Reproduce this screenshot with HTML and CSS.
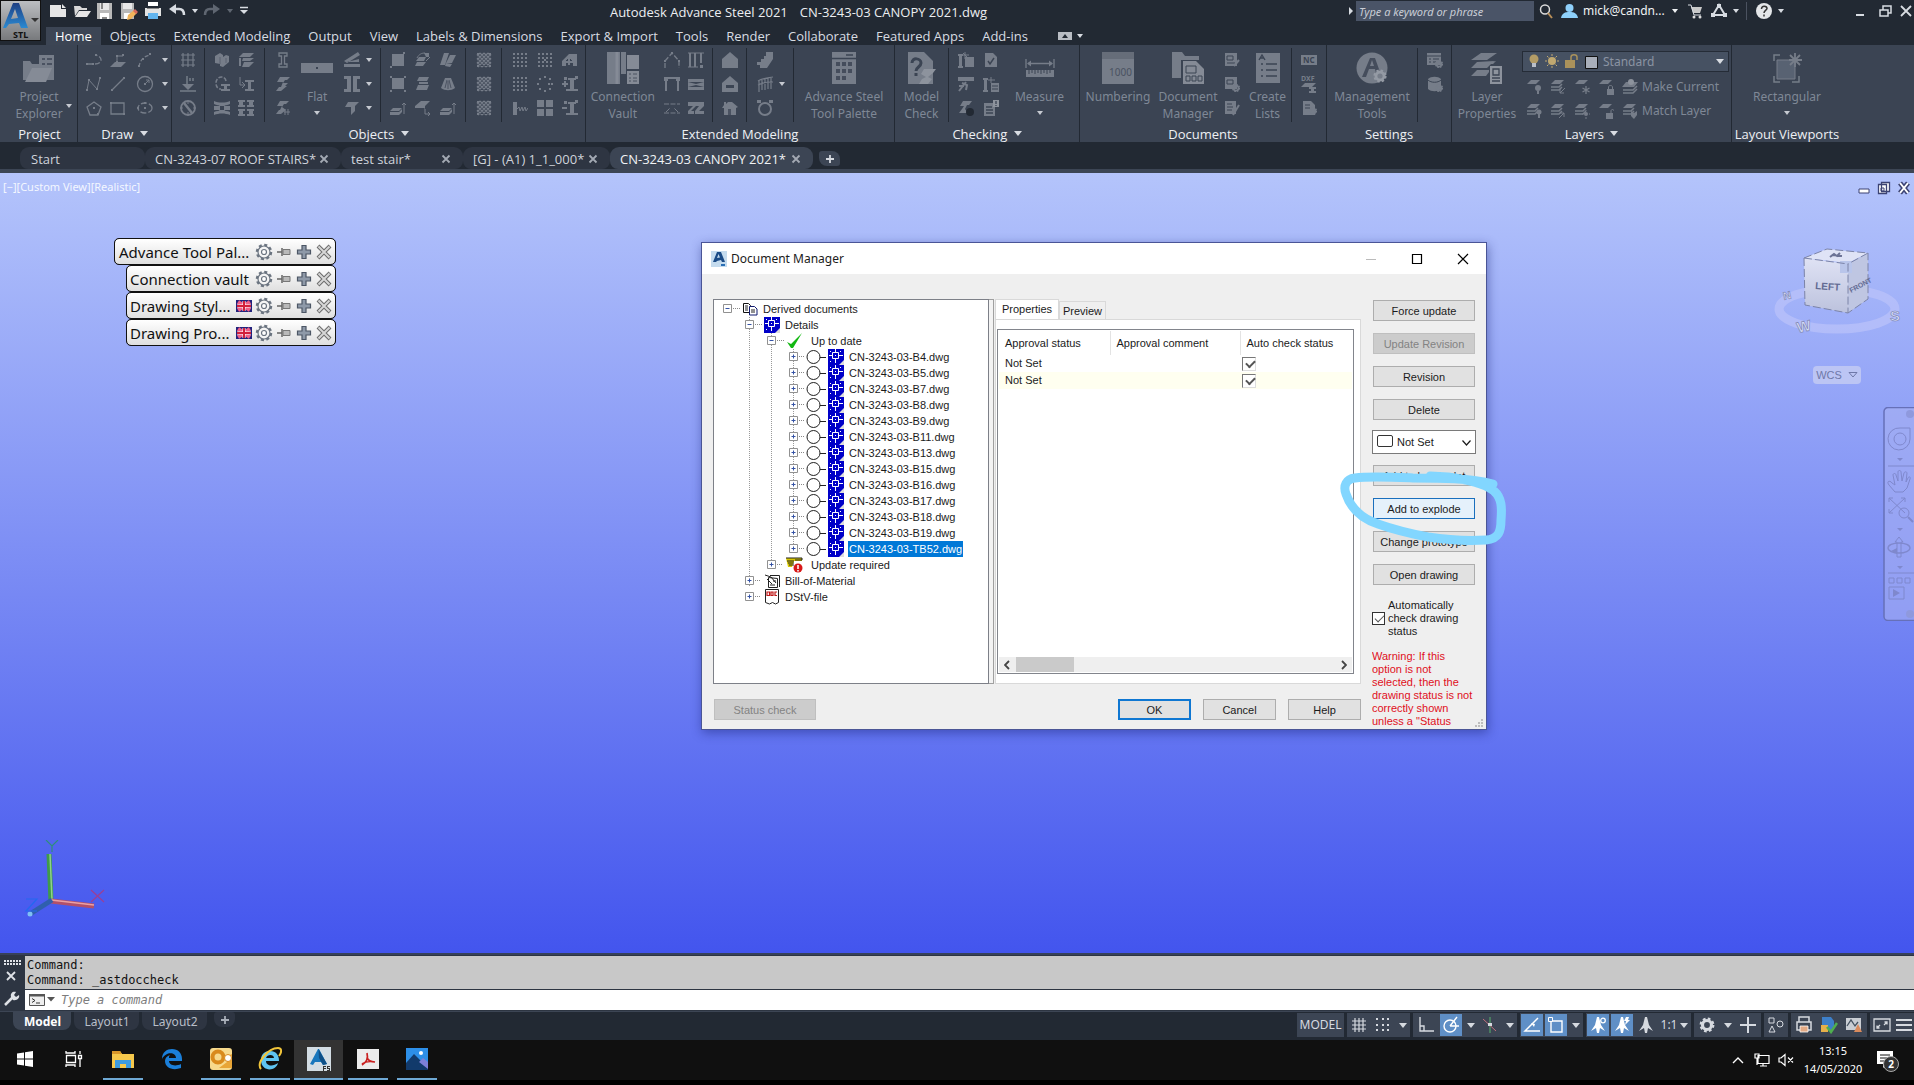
FILE: index.html
```html
<!DOCTYPE html>
<html lang="en">
<head>
<meta charset="utf-8">
<title>Autodesk Advance Steel 2021</title>
<link rel="stylesheet" href="styles.css">
<script src="icons.js" defer></script>
</head>
<body>
<header class="app-header">
  <button class="app-logo" aria-label="Application menu" data-icon="applogo"></button>
  <div class="qat">
    <button aria-label="New" data-icon="new"></button>
    <button aria-label="Open" data-icon="open"></button>
    <button aria-label="Save" data-icon="save"></button>
    <button aria-label="Save as" data-icon="saveas"></button>
    <button aria-label="Plot" data-icon="plot"></button>
    <button aria-label="Undo" data-icon="undo"></button>
    <button class="slim" aria-label="Undo list" data-icon="caret"></button>
    <button class="dim" aria-label="Redo" data-icon="redo"></button>
    <button class="slim dim" aria-label="Redo list" data-icon="caret"></button>
    <button class="slim last" aria-label="Customize" data-icon="menucaret"></button>
  </div>
  <h1 class="app-title"><span>Autodesk Advance Steel 2021</span><span>CN-3243-03 CANOPY 2021.dwg</span></h1>
  <div class="info">
    <span class="i8" data-icon="caretright"></span>
    <input class="search" type="text" aria-label="Search help" placeholder="Type a keyword or phrase">
    <button aria-label="Search" data-icon="magnifier"></button>
    <button class="user"><span data-icon="user"></span>mick@candn...<span class="i8" data-icon="caret"></span></button>
    <button aria-label="Store" data-icon="cart"></button>
    <button aria-label="Apps" data-icon="appsA"></button>
    <button class="slim" aria-label="Apps list" data-icon="caret"></button>
    <span class="rule"></span>
    <button aria-label="Help" data-icon="help"></button>
    <button class="slim" aria-label="Help list" data-icon="caret"></button>
    <span class="wins">
      <button aria-label="Minimize" data-icon="wmin"></button>
      <button aria-label="Restore" data-icon="wrestore"></button>
      <button aria-label="Close" data-icon="wclose"></button>
    </span>
  </div>
  <nav class="menu">
    <a href="#" class="on">Home</a><a href="#">Objects</a><a href="#">Extended Modeling</a><a href="#">Output</a><a href="#">View</a><a href="#">Labels &amp; Dimensions</a><a href="#">Export &amp; Import</a><a href="#">Tools</a><a href="#">Render</a><a href="#">Collaborate</a><a href="#">Featured Apps</a><a href="#">Add-ins</a>
    <button class="minribbon" aria-label="Minimize ribbon" data-icon="ribbonmin"></button>
  </nav>
</header>

<section class="ribbon">
  <div class="panel w-project">
    <div class="tools"><button class="big"><span data-icon="project"></span>Project<br>Explorer</button><span class="i8 side" data-icon="caret"></span></div>
    <h2>Project</h2>
  </div>
  <div class="panel w-draw">
    <div class="tools"><div class="group"><div class="icons draw" data-icons="polyline pline3d arc caret spline line circle caret polygon rect ellipse caret"></div></div></div>
    <h2>Draw <i class="tri"></i></h2>
  </div>
  <div class="panel w-objects">
    <div class="tools">
      <div class="group g32"><div class="icons c1" data-icons="grid level compass"></div></div>
      <div class="group g60"><div class="icons c2" data-icons="block sheet rotbeam copybeam boxframe match"></div></div>
      <div class="group g116"><div class="icons c1" data-icons="ibeam beam3d beamcut"></div>
        <button class="big flat"><span data-icon="flat"></span>Flat<span class="i8" data-icon="caret"></span></button>
        <div class="icons arrows" data-icons="plates caret channel caret fold caret"></div></div>
      <div class="group g86"><div class="icons w25 c3" data-icons="plate splitpl bentpl plateb weld cone slabup slabmove slabup"></div></div>
      <div class="group g36"><div class="icons c1" data-icons="grating grating grating"></div></div>
      <div class="group g84"><div class="icons w25 c3" data-icons="dots dotsx partadd dots ringdots colplus screw squares colminus"></div></div>
    </div>
    <h2>Objects <i class="tri"></i></h2>
  </div>
  <div class="panel w-ext">
    <div class="tools">
      <button class="big w76"><span data-icon="vault"></span>Connection<br>Vault</button>
      <div class="icons c2 frames" data-icons="truss cols portal brace xbrace zbeam"></div>
      <div class="group g36"><div class="icons c1" data-icons="house1 house2 house3"></div></div>
      <div class="group g48"><div class="icons arrows" data-icons="stair none railing caret ring none"></div></div>
      <div class="group grow"><button class="big"><span data-icon="palette"></span>Advance Steel<br>Tool Palette</button></div>
    </div>
    <h2>Extended Modeling</h2>
  </div>
  <div class="panel w-check">
    <div class="tools">
      <button class="big w50"><span data-icon="modelcheck"></span>Model<br>Check</button>
      <div class="group g60"><div class="icons w25 c2" data-icons="beamstar docok hammer beamlist beamlook doclist"></div></div>
      <button class="big grow measure"><span data-icon="measure"></span>Measure<span class="i8" data-icon="caret"></span></button>
    </div>
    <h2>Checking <i class="tri"></i></h2>
  </div>
  <div class="panel w-docs">
    <div class="tools">
      <button class="big w76"><span data-icon="numbering"></span>Numbering</button>
      <button class="big w64"><span data-icon="docmgr"></span>Document<br>Manager</button>
      <div class="icons c1" data-icons="docpen docgear docedit"></div>
      <button class="big w48"><span data-icon="lists"></span>Create<br>Lists</button>
      <div class="group g34"><div class="icons c1" data-icons="nc dxf ncgear"></div></div>
    </div>
    <h2>Documents</h2>
  </div>
  <div class="panel w-settings">
    <div class="tools">
      <button class="big grow"><span data-icon="mgmt"></span>Management<br>Tools</button>
      <div class="group g34"><div class="icons c1" data-icons="tablegear dbgear"></div></div>
    </div>
    <h2>Settings</h2>
  </div>
  <div class="panel w-layers">
    <div class="tools">
      <button class="big w68"><span data-icon="layers"></span>Layer<br>Properties</button>
      <div class="layerbox">
        <div class="layersel"><span class="deco" data-icon="layerstate"></span>
          <select aria-label="Layer"><option>Standard</option></select><i class="tri"></i></div>
        <div class="layerrow"><div class="icons row" data-icons="lay1 lay2 lay3 lay4 lay5"></div><button>Make Current</button></div>
        <div class="layerrow"><div class="icons row" data-icons="lay6 lay7 lay8 lay9 lay10"></div><button>Match Layer</button></div>
      </div>
    </div>
    <h2>Layers <i class="tri"></i></h2>
  </div>
  <div class="panel w-vp">
    <div class="tools"><button class="big w110"><span data-icon="rectvp"></span>Rectangular<span class="i8" data-icon="caret"></span></button></div>
    <h2>Layout Viewports</h2>
  </div>
</section>

<nav class="filetabs">
  <a href="#" class="ft t-start">Start</a>
  <a href="#" class="ft t-roof">CN-3243-07 ROOF STAIRS*<b data-icon="tabx"></b></a>
  <a href="#" class="ft t-test">test stair*<b data-icon="tabx"></b></a>
  <a href="#" class="ft t-g">[G] - (A1) 1_1_000*<b data-icon="tabx"></b></a>
  <a href="#" class="ft t-canopy on">CN-3243-03 CANOPY 2021*<b data-icon="tabx"></b></a>
  <button class="addtab" aria-label="New tab" data-icon="plus"></button>
</nav>

<main class="viewport">
  <p class="viewlabel">[−][Custom View][Realistic]</p>
  <div class="vpwins"><button aria-label="Minimize view" data-icon="vmin"></button><button aria-label="Restore view" data-icon="vrestore"></button><button aria-label="Close view" data-icon="vclose"></button></div>

  <div class="palettes">
    <div class="pal wide"><span>Advance Tool Pal...</span><button aria-label="Settings" data-icon="pgear"></button><button aria-label="Pin" data-icon="ppin"></button><button aria-label="Expand" data-icon="pplus"></button><button aria-label="Close" data-icon="pclose"></button></div>
    <div class="pal"><span>Connection vault</span><button aria-label="Settings" data-icon="pgear"></button><button aria-label="Pin" data-icon="ppin"></button><button aria-label="Expand" data-icon="pplus"></button><button aria-label="Close" data-icon="pclose"></button></div>
    <div class="pal"><span>Drawing Styl...</span><button aria-label="Language" data-icon="flag"></button><button aria-label="Settings" data-icon="pgear"></button><button aria-label="Pin" data-icon="ppin"></button><button aria-label="Expand" data-icon="pplus"></button><button aria-label="Close" data-icon="pclose"></button></div>
    <div class="pal"><span>Drawing Pro...</span><button aria-label="Language" data-icon="flag"></button><button aria-label="Settings" data-icon="pgear"></button><button aria-label="Pin" data-icon="ppin"></button><button aria-label="Expand" data-icon="pplus"></button><button aria-label="Close" data-icon="pclose"></button></div>
  </div>

  <svg class="cube" width="149" height="100" viewBox="1765 245 149 100">
    <defs><linearGradient id="cl" x1="0" y1="0" x2="0" y2="1"><stop offset="0" stop-color="#dfe2f4"/><stop offset="1" stop-color="#bcc2dd"/></linearGradient></defs>
    <ellipse cx="1837" cy="309" rx="58" ry="20" fill="none" stroke="#b9c2f9" stroke-opacity=".75" stroke-width="9"/>
    <path d="M1804 258l23-9 41 4-20 10z" fill="#dfe3f6"/>
    <path d="M1804 258l44 6v49l-43-8z" fill="url(#cl)"/>
    <path d="M1848 264l20-11v46l-20 14z" fill="#bfc6e2"/>
    <path d="M1840 261h12v12h-12z" fill="#b9c5ea"/>
    <path d="M1804 258l44 6v49M1804 258l23-9 41 4-20 11M1804 258l1 47 43 8 20-14v-46" fill="none" stroke="#7c84a8" stroke-dasharray="8 3"/>
    <text x="1815" y="289" class="cubeface" transform="rotate(4 1815 289)">LEFT</text>
    <text x="1851" y="293" class="cubeface slim" transform="rotate(-28 1851 293)">FRONT</text>
    <path d="M1830 257l4-3 3 2 3-3M1832 255l10 1" fill="none" stroke="#6c7396" stroke-width="2"/>
    <text x="1798" y="333" class="cubedir" transform="rotate(-12 1798 333)">W</text>
    <text x="1784" y="300" class="cubedir sm" transform="rotate(-12 1784 300)">N</text>
    <text x="1890" y="321" class="cubedir">S</text>
  </svg>
  <button class="wcs">WCS<svg width="10" height="6" viewBox="0 0 10 6"><path d="M1 .5h8L5 5z" fill="none" stroke="currentColor"/></svg></button>
  <div class="navbar" data-icon="navbar"></div>
  <div class="ucs" data-icon="ucs"></div>

  <section class="dialog" role="dialog" aria-label="Document Manager">
    <header class="dlg-title"><span data-icon="dlglogo"></span><h2>Document Manager</h2>
      <div class="dlg-wins"><button aria-label="Minimize" class="off" data-icon="dmin"></button><button aria-label="Maximize" data-icon="dmax"></button><button aria-label="Close" data-icon="dclose"></button></div></header>
    <div class="dlg-body">
      <div class="dlg-main">
        <div class="split">
          <div class="tree">
            <div class="n"><span data-icon="minus"></span><span data-icon="docs"></span>Derived documents</div>
            <div class="kids k0">
              <div class="n"><span data-icon="minus"></span><span data-icon="dwg"></span>Details</div>
              <div class="kids">
                <div class="n wideic"><span data-icon="minus"></span><span data-icon="okcheck"></span>Up to date</div>
                <div class="kids">
                  <div class="n f"><span data-icon="plusbox"></span><span data-icon="circle0"></span><span data-icon="dwg"></span><em>CN-3243-03-B4.dwg</em></div>
                  <div class="n f"><span data-icon="plusbox"></span><span data-icon="circle0"></span><span data-icon="dwg"></span><em>CN-3243-03-B5.dwg</em></div>
                  <div class="n f"><span data-icon="plusbox"></span><span data-icon="circle0"></span><span data-icon="dwg"></span><em>CN-3243-03-B7.dwg</em></div>
                  <div class="n f"><span data-icon="plusbox"></span><span data-icon="circle0"></span><span data-icon="dwg"></span><em>CN-3243-03-B8.dwg</em></div>
                  <div class="n f"><span data-icon="plusbox"></span><span data-icon="circle0"></span><span data-icon="dwg"></span><em>CN-3243-03-B9.dwg</em></div>
                  <div class="n f"><span data-icon="plusbox"></span><span data-icon="circle0"></span><span data-icon="dwg"></span><em>CN-3243-03-B11.dwg</em></div>
                  <div class="n f"><span data-icon="plusbox"></span><span data-icon="circle0"></span><span data-icon="dwg"></span><em>CN-3243-03-B13.dwg</em></div>
                  <div class="n f"><span data-icon="plusbox"></span><span data-icon="circle0"></span><span data-icon="dwg"></span><em>CN-3243-03-B15.dwg</em></div>
                  <div class="n f"><span data-icon="plusbox"></span><span data-icon="circle0"></span><span data-icon="dwg"></span><em>CN-3243-03-B16.dwg</em></div>
                  <div class="n f"><span data-icon="plusbox"></span><span data-icon="circle0"></span><span data-icon="dwg"></span><em>CN-3243-03-B17.dwg</em></div>
                  <div class="n f"><span data-icon="plusbox"></span><span data-icon="circle0"></span><span data-icon="dwg"></span><em>CN-3243-03-B18.dwg</em></div>
                  <div class="n f"><span data-icon="plusbox"></span><span data-icon="circle0"></span><span data-icon="dwg"></span><em>CN-3243-03-B19.dwg</em></div>
                  <div class="n f"><span data-icon="plusbox"></span><span data-icon="circle0"></span><span data-icon="dwg"></span><em class="sel">CN-3243-03-TB52.dwg</em></div>
                </div>
                <div class="n wideic"><span data-icon="plusbox"></span><span data-icon="update"></span>Update required</div>
              </div>
              <div class="n"><span data-icon="plusbox"></span><span data-icon="bom"></span>Bill-of-Material</div>
              <div class="n"><span data-icon="plusbox"></span><span data-icon="dstv"></span>DStV-file</div>
            </div>
          </div>
          <div class="splitter"></div>
          <div class="tabs">
            <div class="tabrow"><button class="on">Properties</button><button>Preview</button></div>
            <div class="page">
              <div class="list">
                <table>
                  <thead><tr><th class="c-status">Approval status</th><th class="c-comment">Approval comment</th><th>Auto check status</th></tr></thead>
                  <tbody>
                    <tr><td>Not Set</td><td></td><td class="ck"><input type="checkbox" checked aria-label="Auto check status, row 1"></td></tr>
                    <tr class="alt"><td>Not Set</td><td></td><td class="ck"><input type="checkbox" checked aria-label="Auto check status, row 2"></td></tr>
                  </tbody>
                </table>
                <div class="hscroll"><span data-icon="sleft"></span><i></i><span class="end" data-icon="sright"></span></div>
              </div>
            </div>
          </div>
        </div>
        <div class="dlg-foot"><button class="btn check" disabled>Status check</button><button class="btn ok">OK</button><button class="btn">Cancel</button><button class="btn">Help</button></div>
      </div>
      <aside class="actions">
        <button class="btn">Force update</button>
        <button class="btn" disabled>Update Revision</button>
        <button class="btn">Revision</button>
        <button class="btn">Delete</button>
        <div class="combo"><i></i><select aria-label="Approval status"><option>Not Set</option></select><span data-icon="chev"></span></div>
        <button class="btn">Add to batch plot</button>
        <button class="btn hot">Add to explode</button>
        <button class="btn">Change prototype</button>
        <button class="btn">Open drawing</button>
        <label class="auto"><input type="checkbox" checked><span>Automatically check drawing status</span></label>
        <p class="warn">Warning: If this option is not selected, then the drawing status is not correctly shown unless a "Status</p>
      </aside>
    </div>
    <span class="grip" data-icon="grip"></span>
    <svg class="mark" width="180" height="84" viewBox="1335 465 180 84"><path d="M1493 484C1470 478 1440 478 1413 478C1390 477 1370 476 1355 478C1346 479 1343 486 1346 494C1350 506 1360 518 1378 524C1395 530 1412 534 1428 537C1448 540 1470 541 1486 540C1499 539 1501 531 1501 520C1502 508 1502 498 1494 491C1484 483 1468 480 1448 477L1430 476" fill="none" stroke="#82d6ff" stroke-width="9" stroke-linecap="round" stroke-linejoin="round"/></svg>
  </section>
</main>

<section class="command">
  <div class="cmdside" data-icon="cmdside"></div>
  <div class="cmdmain">
    <div class="history"><p>Command:</p><p>Command: _astdoccheck</p></div>
    <div class="prompt"><span data-icon="cmdicon"></span><input type="text" aria-label="Command line" placeholder="Type a command"></div>
  </div>
</section>

<footer class="statusline">
  <nav class="layouts"><a href="#" class="on">Model</a><a href="#">Layout1</a><a href="#">Layout2</a><button aria-label="New layout" data-icon="plus"></button></nav>
  <div class="status">
    <div class="sg"><button class="s-model">MODEL</button></div>
    <div class="sg"><button aria-label="Grid" data-icon="sgrid"></button><button aria-label="Snap" data-icon="sdots"></button><button class="sl" aria-label="Snap options" data-icon="tri"></button></div>
    <div class="sg"><button class="w25" aria-label="Ortho" data-icon="sortho"></button><button class="on" aria-label="Polar" data-icon="spolar"></button><button class="sl" aria-label="Polar options" data-icon="tri"></button><button aria-label="Isodraft" data-icon="siso"></button><button class="sl" aria-label="Isodraft options" data-icon="tri"></button></div>
    <div class="sg"><button class="on" aria-label="Tracking" data-icon="sangle"></button><button class="on" aria-label="Object snap" data-icon="sosnap"></button><button class="sl" aria-label="Snap list" data-icon="tri"></button></div>
    <div class="sg"><button class="on" aria-label="Annotation visibility" data-icon="sann1"></button><button class="on" aria-label="Auto scale" data-icon="sann2"></button><button aria-label="Annotation" data-icon="sann3"></button><button class="scale">1:1<span class="i8" data-icon="tri"></span></button></div>
    <div class="sg"><button class="w25" aria-label="Workspace" data-icon="sgear"></button><button class="sl" aria-label="Workspace list" data-icon="tri"></button><button class="w25" aria-label="Monitor" data-icon="splus"></button></div>
    <div class="sg"><button aria-label="Isolate" data-icon="sshapes"></button></div>
    <div class="sg"><button class="w25" aria-label="Plot" data-icon="sprint"></button><button aria-label="Standards" data-icon="sstd"></button><button class="w25" aria-label="Performance" data-icon="sperf"></button></div>
    <div class="sg"><button aria-label="Clean screen" data-icon="sclean"></button><button class="edge" aria-label="Customization" data-icon="sburger"></button></div>
  </div>
</footer>

<footer class="taskbar">
  <button aria-label="Start" data-icon="win"></button>
  <button aria-label="Task view" data-icon="taskview"></button>
  <button class="run" aria-label="File Explorer" data-icon="explorer"></button>
  <button aria-label="Edge" data-icon="edge"></button>
  <button class="run" aria-label="Outlook" data-icon="outlook"></button>
  <button class="run" aria-label="Internet Explorer" data-icon="ie"></button>
  <button class="run cur" aria-label="Advance Steel" data-icon="tas"></button>
  <button class="run" aria-label="PDF reader" data-icon="pdf"></button>
  <button class="run" aria-label="Photos" data-icon="photos"></button>
  <div class="tray"><button aria-label="Hidden icons" data-icon="up"></button><button aria-label="Network" data-icon="net"></button><button aria-label="Volume" data-icon="vol"></button>
    <time>13:15<br>14/05/2020</time><button class="notif" aria-label="Notifications"><span data-icon="notif"></span><b>2</b></button></div>
</footer>
</body>
</html>
```
FILE: styles.css
```css
* { box-sizing: border-box; }
html, body { margin: 0; padding: 0; }
body {
  display: flex; flex-direction: column; min-height: 100vh; overflow: hidden;
  background: #222933; color: #d8dce2;
  font: 12px/16px "Noto Sans", "Open Sans", sans-serif;
}
button, input, select { font: inherit; color: inherit; margin: 0; padding: 0; border: 0; background: none; }
a { color: inherit; text-decoration: none; }
h1, h2, p { margin: 0; font-weight: 400; font-size: inherit; }
svg { display: block; flex: none; }
button { display: flex; align-items: center; justify-content: center; white-space: nowrap; }
em, i { font-style: normal; }
.tri { display: inline-block; border: 4px solid transparent; border-top: 5px solid #d8dce2; border-bottom: 0; }
.app-title, .menu, .panel h2, .filetabs { font-family: "Open Sans", "Noto Sans", sans-serif; font-size: 13px; }

/* title bar */
.app-header { display: grid; grid-template: 27px 18px / 46px 206px 1fr 569px; height: 45px; flex: none; }
.app-logo { grid-row: 1 / 3; justify-content: flex-start; align-items: flex-start; }
.qat { display: flex; align-items: center; height: 22px; }
.qat button { width: 24px; }
.qat .slim { width: 12px; }
.qat .last { width: 16px; }
.dim { color: #5f6671; }
.app-title { display: flex; justify-content: center; gap: 12px; line-height: 24px; color: #eceef1; white-space: nowrap; }
.info { display: flex; align-items: center; height: 22px; }
.info button { width: 24px; flex: none; }
.info .slim { width: 10px; }
.info .i8 { width: 11px; display: flex; justify-content: center; }
.search { width: 178px; height: 20px; background: #4a5467; padding: 0 3px; font-size: 11px; font-style: italic; }
.search::placeholder { color: #c9cdd6; opacity: 1; }
.info .user { width: auto; gap: 5px; padding-left: 3px; padding-right: 2px; color: #f0f2f4; }
.rule { width: 1px; height: 18px; background: #4b5260; margin: 0 5px; }
.wins { display: flex; margin-left: auto; gap: 1px; }
.wins button:last-child { width: 16px; }
.menu { grid-column: 2 / -1; display: flex; align-items: stretch; line-height: 18px; }
.menu a { padding: 0 9px; white-space: nowrap; }
.menu a.on { background: #3c4554; color: #fff; }
.minribbon { margin-left: 21px; }

/* ribbon */
.ribbon { display: flex; flex: none; height: 97px; background: #3b4453; padding-left: 2px; color: #7f8896; overflow: hidden; }
.panel { flex: none; display: flex; flex-direction: column; border-right: 1px solid #222933; }
.panel h2 { text-align: center; color: #eef0f3; line-height: 16px; height: 16px; white-space: nowrap; }
.panel h2 .tri { margin: 0 0 3px 3px; }
.w-project { width: 76px; } .w-draw { width: 94px; } .w-objects { width: 414px; } .w-ext { width: 309px; }
.w-check { width: 185px; } .w-docs { width: 247px; } .w-settings { width: 125px; } .w-layers { width: 280px; }
.w-vp { flex: 1; border: 0; }
.w-vp h2 { width: 110px; }
.tools { flex: 1; display: flex; padding-top: 3px; min-height: 0; }
.group { display: flex; justify-content: center; height: 74px; }
.group + .group, .icons + .group, .big + .group { border-left: 1px solid #222933; }
.w-draw .group { padding-left: 4px; }
.g32 { width: 32px; } .g34 { width: 34px; } .g36 { width: 36px; } .g48 { width: 48px; } .g60 { width: 60px; }
.g84 { width: 84px; padding-left: 3px; } .g86 { width: 86px; } .g116 { width: 116px; }
.grow { flex: 1; }
.frames { padding-right: 4px; }
.icons { display: grid; grid-auto-rows: 24px; align-content: start; color: #767d89; }
.icons > span { display: flex; align-items: center; justify-content: center; }
.c1 { grid-template-columns: 24px; } .c2 { grid-template-columns: 24px 24px; } .c3 { grid-template-columns: repeat(3, 24px); }
.w25.c2 { grid-template-columns: 25px 25px; } .w25.c3 { grid-template-columns: repeat(3, 25px); }
.draw { grid-template-columns: 24px 24px 30px 10px; }
.arrows { grid-template-columns: 24px 10px; }
.icons > .i-caret { color: #c6cad1; }
.big { flex-direction: column; justify-content: flex-start; line-height: 17px; height: 76px; width: 74px; color: #7f8896; }
.big > span:first-child { height: 40px; display: flex; align-items: center; color: #767d89; }
.big .i8 { padding-top: 4px; color: #c6cad1; }
.big.grow { width: auto; }
.w-project .tools { position: relative; }
.side { position: absolute; right: 4px; top: 57px; color: #c6cad1; }
.flat { width: 45px; } .w48 { width: 47px; } .w50 { width: 53px; } .w64 { width: 64px; } .w68 { width: 70px; } .w76 { width: 76px; } .w110 { width: 110px; }
.measure { padding-right: 8px; }
.w-ext .grow .big { width: 100px; }
.layerbox { flex: 1; padding: 3px 2px 0 0; }
.layersel { position: relative; height: 21px; border: 1px solid #252c37; background: #465162; margin-bottom: 3px; }
.layersel select { width: 100%; height: 19px; padding-left: 80px; appearance: none; color: #8b94a2; }
.layersel .deco { position: absolute; left: 4px; top: 1px; }
.layersel .tri { position: absolute; right: 4px; top: 7px; }
.layerrow { display: flex; height: 24px; align-items: center; }
.row { grid-template-columns: repeat(5, 24px); }
.layerrow button { color: #7f8896; }

/* drawing tabs */
.filetabs { display: flex; flex: none; height: 31px; padding-top: 5px; border-bottom: 4px solid #3c4554; }
.ft { display: flex; align-items: center; justify-content: space-between; background: #2e3542; border-radius: 9px 9px 8px 8px; height: 22px; padding: 1px 12px 0 10px; color: #cfd3da; white-space: nowrap; }
.ft b { color: #a3a9b3; }
.ft.on { background: #3c4554; color: #f1f3f5; }
.t-start { width: 125px; margin-left: 20px; padding-left: 11px; }
.t-roof { width: 196px; } .t-test { width: 122px; } .t-g { width: 147px; } .t-canopy { width: 203px; }
.addtab { width: 21px; margin-left: 6px; height: 15px; margin-top: 4px; background: #3c4554; border-radius: 3px 8px 3px 8px; color: #d5d9df; }

/* viewport */
.viewport { position: relative; flex: 1; min-height: 780px; background: linear-gradient(#b4c4fb, #4355ee); overflow: hidden; color: #111; }
.viewlabel { padding: 6px 3px; font-size: 11px; color: #f4f7ff; }
.vpwins { position: absolute; right: 0; top: 8px; display: flex; }
.vpwins button { width: 20px; }
.palettes { position: absolute; left: 114px; top: 65px; width: 222px; display: flex; flex-direction: column; align-items: flex-end; }
.pal { display: flex; align-items: center; width: 210px; height: 27px; border: 1px solid #111; border-radius: 5px; background: linear-gradient(#fff, #dfdfdf); padding: 0 1px 0 3px; font-size: 15px; outline: 1px solid rgba(17, 17, 17, .4); outline-offset: -1px; }
.pal.wide { width: 222px; padding-left: 4px; }
.pal span:first-child { flex: 1; white-space: nowrap; }
.pal button { width: 20px; flex: none; }
.cube { position: absolute; right: 0; top: 72px; }
.cubeface { font: bold 10px "Liberation Sans", sans-serif; fill: #636b93; }
.cubeface.slim { font-family: "Liberation Sans Narrow", "Liberation Sans", sans-serif; font-size: 7px; }
.cubedir { font: bold 15px "Liberation Sans", sans-serif; fill: #d6dbf6; stroke: #7881ae; stroke-width: .6px; }
.cubedir.sm { font-size: 11px; }
.wcs { position: absolute; right: 53px; top: 193px; width: 48px; height: 18px; border-radius: 4px; background: #bcc5f4; color: #6f78a8; font: 11px "Liberation Sans", sans-serif; gap: 6px; }
.navbar { position: absolute; right: 0; top: 234px; color: #7f88cd; }
.ucs { position: absolute; left: 20px; bottom: 33px; }

/* document manager */
.dialog { position: absolute; left: 701px; top: 69px; width: 786px; height: 488px; border: 1px solid #4a5596; background: #efefef; box-shadow: 1px 3px 10px rgba(20, 30, 110, .45); font: 11px/13px "Liberation Sans", Arial, sans-serif; color: #1b1b1b; }
.dlg-title { display: flex; align-items: center; height: 31px; background: #fff; padding-left: 9px; gap: 4px; font: 12px/16px "Noto Sans", sans-serif; }
.dlg-wins { display: flex; margin-left: auto; }
.dlg-wins button { width: 46px; color: #000; }
.dlg-wins .off { color: #bbb; }
.dlg-body { display: flex; padding: 25px 10px 0 11px; gap: 11px; height: 455px; }
.dlg-main { flex: 1; display: flex; flex-direction: column; padding-left: 1px; }
.split { display: flex; height: 385px; margin-left: -1px; }
.tree { width: 276px; border: 1px solid #7d8088; background: #fff; padding: 1px 0 0 8px; }
.n { display: flex; align-items: center; height: 16px; white-space: nowrap; }
.n > span:first-child { width: 20px; }
.n > span:nth-child(2) { width: 21px; display: flex; }
.n.f > span:first-child { width: 17px; }
.n.f > span:nth-child(2) { width: 23px; } .n.f > span:nth-child(3) { width: 20px; }
.n.wideic > span:nth-child(2) { width: 25px; }
.kids { padding-left: 22px; }
.k0 .kids { background: repeating-linear-gradient(#999 0 1px, transparent 1px 2px) 5px 0 / 1px 100% no-repeat; }
.k0 { background: repeating-linear-gradient(#999 0 1px, transparent 1px 2px) 27px 0 / 1px 270px no-repeat; }
.k0 > .kids { background-position: 27px 0; background-size: 1px 230px; }
.k0 > .kids > .kids { background-position: 27px 0; background-size: 1px 204px; }
.n em { padding: 0 1px; line-height: 16px; }
.sel { background: #0078d7; color: #fff; }
.splitter { width: 5px; border: solid #a0a0a0; border-width: 1px 1px 1px 0; background: #f3f3f3; }
.tabs { flex: 1; display: flex; flex-direction: column; padding-left: 1px; }
.tabrow { display: flex; align-items: flex-end; height: 21px; margin-bottom: -1px; }
.tabrow button { height: 19px; border: 1px solid #d9d9d9; border-bottom: 0; padding: 0 4px; width: 47px; }
.tabrow .on { height: 21px; width: 64px; background: #fff; padding-bottom: 2px; }
.page { flex: 1; background: #fff; border: 1px solid #d9d9d9; padding: 9px 6px 9px 1px; display: flex; }
.list { flex: 1; display: flex; flex-direction: column; border: 1px solid #82858c; padding: 1px; }
table { border-collapse: collapse; table-layout: fixed; width: 100%; }
th, td { text-align: left; font-weight: 400; padding: 0 6px; white-space: nowrap; height: 17px; }
th { height: 24px; border-right: 1px solid #e3e3e3; }
th:last-child { border: 0; padding-right: 0; }
.c-status { width: 111px; } .c-comment { width: 130px; }
.alt { background: #fffff0; }
td.ck { padding: 0 2px; }
.ck input { display: block; appearance: none; position: relative; width: 14px; height: 14px; background: #fff; border: 1px solid; border-color: #777 #ddd #ddd #777; }
.ck input::before, .auto input::before { content: ""; position: absolute; left: 3px; top: 2px; width: 7px; height: 4px; border: solid #555; border-width: 0 0 2px 2px; transform: rotate(-45deg); }
.hscroll { display: flex; align-items: center; height: 15px; background: #efefef; margin-top: auto; padding: 0 5px; color: #444; }
.hscroll i { width: 58px; height: 15px; background: #cacaca; margin-left: 6px; }
.hscroll .end { margin-left: auto; }
.dlg-foot { display: flex; justify-content: flex-end; gap: 12px; margin-top: 15px; }
.btn { height: 21px; border: 1px solid #adadad; background: #e1e1e1; padding-top: 1px; }
.btn:disabled { background: #cccccc; border-color: #bfbfbf; color: #838383; }
.dlg-foot .btn { width: 73px; }
.dlg-foot .check { width: 102px; margin-right: auto; }
.dlg-foot .ok { border: 2px solid #0f77d2; }
.actions { width: 104px; padding-top: 1px; display: flex; flex-direction: column; gap: 12px; overflow: hidden; }
.actions .btn { width: 102px; flex: none; margin-left: 1px; }
.actions .hot { background: #e5f1fb; border-color: #1a6fbd; }
.combo { position: relative; height: 24px; margin: -2px 0 -1px; flex: none; border: 1px solid #7a7a7a; background: #fff; }
.combo select { width: 100%; height: 22px; padding: 1px 0 0 24px; appearance: none; }
.combo i { position: absolute; left: 4px; top: 4px; width: 16px; height: 12px; border: 1px solid #333; border-radius: 2px; }
.combo span { position: absolute; right: 4px; top: 9px; }
.auto { display: flex; align-items: center; gap: 3px; padding-top: 2px; }
.auto input { appearance: none; position: relative; width: 13px; height: 13px; flex: none; background: #fff; border: 1px solid #333; }
.auto input::before { left: 2px; width: 8px; border-width: 0 0 1px 1px; }
.warn { color: #e0101c; width: 104px; flex: none; }
.grip { position: absolute; right: 3px; bottom: 2px; color: #bdbdbd; }
.mark { position: absolute; left: 633px; top: 222px; pointer-events: none; }

/* command line */
.command { display: flex; flex: none; height: 58px; background: #2d3542; border-top: 2px solid #37415a; }
.cmdside { width: 25px; color: #dfe2e7; }
.cmdmain { flex: 1; padding-top: 1px; font: 12px/15px "DejaVu Sans Mono", "Liberation Mono", monospace; color: #111; }
.history { height: 33px; background: #c8c8c8; padding: 2px; }
.prompt { display: flex; align-items: center; height: 20px; margin-top: 1px; background: #fff; padding-left: 4px; gap: 6px; }
.prompt input { flex: 1; font-style: italic; }
.prompt input::placeholder { color: #7d7d7d; opacity: 1; }

/* layout tabs and status bar */
.statusline { display: flex; justify-content: space-between; flex: none; height: 29px; border-top: 1px solid #3c4554; }
.layouts { display: flex; height: 18px; padding-left: 13px; font-size: 12px; line-height: 20px; }
.layouts a { background: #2e3542; padding: 0 9px 0 10px; border-radius: 0 0 8px 8px; margin-right: 3px; min-width: 65px; text-align: center; color: #b9bfc9; }
.layouts a.on { background: #3c4554; color: #fff; font-weight: 700; min-width: 58px; }
.layouts button { width: 21px; height: 15px; background: #2e3542; border-radius: 3px 3px 8px 8px; margin-left: 4px; color: #a9afb9; }
.status { display: flex; gap: 3px; padding-top: 1px; height: 25px; color: #d6dae0; }
.sg { display: flex; background: #3c4554; }
.status button { width: 24px; }
.status .on { width: 22px; margin: 1px; background: #5f8fc6; color: #fff; }
.status .sl { width: 15px; }
.status .s-model { width: 47px; font-size: 12px; }
.status .scale { width: 33px; gap: 3px; font-size: 12px; }
.status .w25 { width: 26px; }
.status .edge { width: 20px; }

/* taskbar */
.taskbar { display: flex; flex: none; height: 45px; background: #101010; border-bottom: 5px solid #000; color: #fff; }
.taskbar > button { width: 49px; border-bottom: 2px solid transparent; position: relative; }
.taskbar .run::after { content: ""; position: absolute; left: 5px; right: 4px; bottom: -2px; height: 2px; background: #6ea8d4; }
.taskbar .cur { background: #333; }
.taskbar .cur::after { left: 0; right: 0; }
.tray { margin-left: auto; display: flex; align-items: center; padding-right: 12px; }
.tray button { width: 24px; }
.tray time { width: 70px; text-align: center; line-height: 18px; font-size: 11px; }
.tray .notif { position: relative; width: 34px; }
.notif b { position: absolute; left: 15px; top: 6px; width: 16px; height: 16px; border-radius: 8px; border: 1px solid #aaa; background: #333; font-size: 10px; line-height: 14px; }
```
FILE: icons.js
```js
// Icon registry: name -> [width, height, svg body]; 16x16 unless sized.
const S = (d, w = 1, extra = "") => `<path d="${d}" fill="none" stroke="currentColor" stroke-width="${w}" ${extra}/>`;
const F = (d, c = "currentColor") => `<path d="${d}" fill="${c}"/>`;
const dots = (pts) => F(pts.map(([x, y]) => `M${x} ${y}h2v2h-2z`).join(""));
const layer = (y) => `M5 ${y}h9l-4 4H1z`;
const stack = F(layer(1)) + S("M1 8h8l3-3M1 11h8l3-3", 1.5);
const doc = "M2 1h8l4 4v10H2z";
const gear = (cx, cy, r, c = "currentColor") =>
  `<circle cx="${cx}" cy="${cy}" r="${r}" fill="none" stroke="${c}" stroke-width="${r * 0.7}"/><circle cx="${cx}" cy="${cy}" r="${r * 1.4}" fill="none" stroke="${c}" stroke-width="${r * 0.5}" stroke-dasharray="${r * 0.6} ${r * 0.5}"/>`;
const hatch = S("M1 4L4 1M1 8l7-7M1 12L12 1M2 15L15 2M6 15l9-9M10 15l5-5M12 1l3 3M8 1l7 7M4 1l11 11M1 2l13 13M1 6l9 9M1 10l5 5", 1.2) + dots([[1, 1], [13, 1], [1, 13], [13, 13]]);
const dotgrid = dots([0, 4, 8, 12].flatMap((y) => [0, 4, 8, 12].map((x) => [x + 1, y + 1])));
const annA = F("M7 0l2 0 2 8 4 6-5-3-1 5h-2l-1-5-5 3 4-6z");

const ICONS = {
  none: [1, 1, ""],
  caret: [8, 8, F("M1 2h6L4 6z")],
  tri: [8, 8, F("M0 2h8L4 7z")],
  caretright: [8, 10, F("M2 1l4 4-4 4z")],
  menucaret: [10, 10, S("M1 1.500h8", 1.500) + F("M1 4h8L5 8z")],
  plus: [10, 10, S("M5 1v8M1 5h8", 1.800)],
  tabx: [10, 10, S("M1.500 1.500l7 7M8.500 1.500l-7 7", 1.800)],
  applogo: [42, 41, `<defs><linearGradient id="lg" x1="0" y1="0" x2="0" y2="1"><stop offset="0" stop-color="#bdbfc2"/><stop offset="1" stop-color="#77797c"/></linearGradient><linearGradient id="la" x1="0" y1="0" x2="0" y2="1"><stop offset="0" stop-color="#1e3f83"/><stop offset="1" stop-color="#2b8ad2"/></linearGradient></defs><rect x=".5" y=".5" width="40" height="40" fill="url(#lg)" stroke="#111"/><path d="M3 28L13 3h6l9 25h-7l-2-5-10 1-3 4zM11 19l7-1-3-9z" fill="url(#la)"/><path d="M31 18h8l-4 4z" fill="#333"/><text x="13" y="38" font-family="Noto Sans" font-size="9" font-weight="700" fill="#111">STL</text>`],
  new: [18, 16, F("M1 2h11v4h5v8H1z", "#e6e6e6") + F("M13 1l4 4h-4z", "#e6e6e6")],
  open: [18, 16, F("M1 3h6l2 2h5v2H6l-4 6z", "#d9d9d9") + F("M6 8h12l-4 6H2z", "#e6e6e6")],
  save: [18, 18, F("M1 1h15v16H1z", "#b9b9b9") + F("M4 1h9v7H4z", "#e8e8e8") + F("M4 11h9v6H4z", "#fff") + F("M6 15h5v2H6zM5 1h2v6H5z", "#888")],
  saveas: [18, 18, F("M1 1h13v16H1z", "#b9b9b9") + F("M3 1h9v6H3z", "#e8e8e8") + F("M4 11h6v6H4z", "#fff") + F("M8 13l6-5 3 3-6 6-4 1z", "#f1b45b") + F("M13 9l2-2 3 3-2 2z", "#d96b5c")],
  plot: [18, 18, F("M4 0h10v4H4z", "#fff") + F("M1 6h16v8H1z", "#e3e3e3") + F("M4 11h10v6H4z", "#62b4ee") + F("M3 6h12v1H3z", "#888")],
  undo: [18, 14, S("M5 5h6c4 0 5 3 5 6", 2.500) + F("M8 0v10L1 5z")],
  redo: [18, 14, S("M13 5H7c-4 0-5 3-5 6", 2.500) + F("M10 0v10l7-5z")],
  magnifier: [16, 16, `<circle cx="7" cy="6.500" r="4.500" fill="none" stroke="#dcdcdc" stroke-width="1.500"/><path d="M10 10l4 5" stroke="#b98f57" stroke-width="2"/>`],
  user: [17, 16, `<circle cx="8.500" cy="5" r="4" fill="#8ed0fb"/>` + F("M0 15c1-5 4-6 8.500-6s7.500 1 8.500 6z", "#8ed0fb")],
  cart: [16, 16, F("M4 4h11l-2 6H6z", "#c9c9c9") + S("M1 2h3l3 10h7") + `<circle cx="7" cy="14" r="1.500" fill="#ddd"/><circle cx="13" cy="14" r="1.500" fill="#ddd"/>`],
  appsA: [16, 16, S("M8 2L2 12h12z", 2) + F("M6 1h4v4H6zM0 10h4v4H0zM12 10h4v4h-4z")],
  help: [18, 18, `<circle cx="9" cy="9" r="8" fill="#e4e6e9"/><path d="M6.500 7c0-4 5.500-3 5.500-.500C12 8 9 8.500 9 11M9 12.500v2" fill="none" stroke="#333" stroke-width="1.500"/>`],
  wmin: [14, 14, S("M3 11h8", 2)],
  wrestore: [14, 14, S("M2 6h8v6H2zM5 6V2h8v7h-3", 1.500)],
  wclose: [14, 14, S("M2 2l10 10M12 2L2 12", 1.800)],
  ribbonmin: [26, 12, F("M0 2h14v8H0z", "#b9bdc4") + F("M4 8l3-4 3 4z", "#222933") + F("M19 4h6l-3 4z")],
  project: [34, 30, F("M17 2h15v25H17z") + F("M1 8h7l2 3h9v4L12 16 5 27H1z") + F("M10 15h20l-6 14H3z", "#858b96") + `<path d="M20 6h3M25 6h5M20 11h3M25 11h5" stroke="#4a5261" stroke-width="2"/>`],
  polyline: [16, 16, S("M1 12h6M9 12c8 0 8-8 0-9", 1.300, 'stroke-dasharray="5 2"') + dots([[0, 11], [6, 11], [9, 2]])],
  pline3d: [16, 16, F("M5 10h11l-5 5H0z") + S("M7 11V4h6") + dots([[6, 9], [6, 3], [12, 2]])],
  arc: [16, 16, S("M2 15C3 8 7 4 13 3", 1.300, 'stroke-dasharray="4 2"') + dots([[1, 13], [5, 6], [12, 1]])],
  spline: [16, 16, S("M1 14L3 4l8 9 3-11") + dots([[0, 13], [2, 3], [10, 12], [13, 1]])],
  line: [16, 16, S("M2 14L14 2", 1.300) + dots([[1, 13], [13, 1]])],
  circle: [18, 18, `<circle cx="9" cy="9" r="7.500" fill="none" stroke="currentColor" stroke-width="1.300"/>` + S("M9 9l4-4M10 5h3v3") + dots([[8, 8]])],
  polygon: [16, 16, S("M8 2l7 5-3 8H4L1 7z", 1.300) + dots([[7, 7], [11, 13]])],
  rect: [16, 16, S("M1 3h13v11H1z", 1.300) + dots([[0, 2], [13, 13]])],
  ellipse: [16, 16, `<ellipse cx="8" cy="8" rx="7" ry="5" fill="none" stroke="currentColor" stroke-width="1.300" stroke-dasharray="6 2"/>` + dots([[7, 7], [7, 2], [0, 7]])],
  grid: [16, 16, S("M3 1v14M8 1v14M13 1v14M1 3h14M1 8h14M1 13h14", 1.200)],
  level: [16, 16, F("M2 8h12l-6 6z") + S("M7 0v8M10 2v3M13 2v3M0 15h16", 1.500)],
  compass: [18, 18, `<circle cx="9" cy="9" r="7" fill="none" stroke="currentColor" stroke-width="1.800"/>` + S("M5 4l8 10", 2.500) + S("M9 1v4M9 13v4M1 9h3M14 9h3")],
  block: [16, 16, F("M1 4l5-3 3 2v2l3-2 3 1v6l-6 5-3-1v-2l-5-1z") + `<path d="M6 5v7M12 6v5" stroke="#5b6370"/>`],
  sheet: [16, 16, F("M5 1h11l-4 4H1zM5 6h11l-4 3H4zM6 10h10l-5 5H4zM1 6h2v8H1z")],
  rotbeam: [16, 16, S("M12 5C11-1 2 0 2 7c0 5 3 6 5 6", 1.600, 'stroke-dasharray="4 1.500"') + F("M7 8h9v2h-3v3h3v2H7v-2h3v-3H7z")],
  copybeam: [16, 16, S("M2 1v8h4M4 6l3 3-3 3") + F("M7 4h9v2h-3v7h3v2H7v-2h3V6H7z")],
  boxframe: [16, 16, F("M0 1c5 2 11 2 16 0v3c-5 2-11 2-16 0zM0 15c5-2 11-2 16 0v-3c-5-2-11-2-16 0zM0 6h16v4H0z") + `<path d="M5.500 5.500h5v5h-5z" fill="#3b4453" stroke="currentColor"/>`],
  match: [16, 16, F("M0 0h7v2H5v3h2v2H0V5h1V2H0zM9 0h7v2h-1v3h1v2H9V5h2V2H9zM0 9h7v2H5v3h2v2H0v-2h1v-3H0zM9 9h7v2h-1v3h1v2H9v-2h2v-3H9z")],
  ibeam: [16, 16, S("M4 1h8v3H9.500v8H12v3H4v-3h2.500V4H4z", 1.300)],
  beam3d: [16, 16, F("M5 1h10l-3 3h-2l-2 3h5l-3 3H8l4 0-6 5H1l3-4h2L8 6H2z")],
  beamcut: [16, 16, F("M5 1h9l-3 3H9L7 7l4 3-5 4H1l3-4h1l2-4H2z") + S("M9 12h6M13 9v6M10 9v6")],
  flat: [32, 12, F("M0 1h32v10H0z") + F("M15 5h2v2h-2z", "#3b4453")],
  plates: [16, 16, F("M0 9L14 0l2 3L3 11zM0 12h16v3H0zM3 10h12V7z")],
  channel: [16, 16, F("M0 0h7v16H0v-3h3V3H0zM16 0H9v16h7v-3h-3V3h3z")],
  fold: [16, 16, F("M4 2h11l-4 4v5l-4 4V7H1z")],
  plate: [16, 16, F("M2 2h12v12H2z") + dots([[0, 14], [13, 0]])],
  plateb: [16, 16, F("M2 2h12v11H2z") + dots([[0, 0], [14, 0], [0, 14], [14, 14]])],
  splitpl: [16, 16, F("M4 5h7l-2 4H1zM2 10h9l-3 4H0zM9 1h5v4h-3z") + S("M2 6c2-4 5-5 8-5M11 9l4-4")],
  bentpl: [16, 16, F("M4 1h5L5 13H0zM10 3h6l-4 8H6zM6 11l6 1-2 3-5-1z")],
  weld: [16, 16, F("M4 1h10l-2 4H2zM3 9h11l-2 5H1z") + S("M4 7h9", 2)],
  cone: [16, 16, F("M5 2h6l4 10c-4 3-10 3-14 0z") + `<path d="M5 12L7 4M9 4l2 8M8 5v8" stroke="#4a5261" fill="none"/>`],
  slabup: [16, 16, F("M3 8h9l-3 3H0zM0 12h9v3H0zM9 12l3-3v3l-3 3z") + S("M14 14V3M12 5l2-2 2 2")],
  slabmove: [16, 16, F("M6 1h9l-5 5v3L9 8H0V6z") + S("M10 9v5h5M13 12l2 2-2 2")],
  grating: [16, 16, hatch],
  dots: [16, 16, dotgrid],
  dotsx: [16, 16, dotgrid + S("M5 5l6 6M11 5l-6 6")],
  ringdots: [16, 16, dots([[7, 0], [12, 2], [14, 7], [12, 12], [7, 14], [2, 12], [0, 7], [2, 2], [11, 7]])],
  partadd: [16, 16, F("M7 2h8v12h-4v-3H4v3H0V9z") + `<path d="M7 7v6M4 10h6" stroke="#3b4453" stroke-width="4"/>` + S("M7 7v6M4 10h6", 2)],
  colplus: [16, 16, F("M8 3h4v10h4v2H4v-2h4z") + S("M0 8h6M3 5v6", 2) + F("M2 1h3v3H2zM6 2h8v2H6zM13 0h3v3h-3z")],
  colminus: [16, 16, F("M8 3h4v10h4v2H4v-2h4z") + S("M0 8h5", 2) + F("M2 1h3v3H2zM6 2h8v2H6zM13 0h3v3h-3z")],
  screw: [16, 16, F("M1 2h4v13H1z") + S("M5 9l2-2 1 4 2-4 1 4 2-4 1 4 2-3")],
  squares: [16, 16, F("M0 0h7v7H0zM9 0h7v7H9zM0 9h7v7H0zM9 9h7v7H9z")],
  vault: [32, 34, F("M0 1h13v32H0z") + F("M14 1h5v22h-5z") + F("M20 4h12v14H20zM20 20h12v13H20z", "#858b96") + `<path d="M10 1v32" stroke="#858b96" stroke-width="3"/><path d="M22 23h2M26 23h4M22 27h2M26 27h4M22 30h2M26 30h4" stroke="#4a5261"/>`],
  truss: [16, 16, S("M1 16V9l7-8 7 8v7", 1.300, 'stroke-dasharray="5 2"') + dots([[0, 8], [7, 0], [14, 8]])],
  cols: [16, 16, S("M2 1v14M7 1v14M13 1v10", 2) + S("M0 1h16M0 15h10") + F("M12 13h3v3h-3z")],
  portal: [16, 16, S("M2 15V2h12v13", 2) + F("M0 1h4v4H0zM12 1h4v4h-4z")],
  brace: [16, 16, F("M0 3h16v3H0zM0 11h16v3H0zM0 6l8 2 8-2v5l-8-2-8 2z")],
  xbrace: [16, 16, S("M0 4h16M0 13h16M2 12l4-4M14 12l-4-4", 1, 'stroke-dasharray="5 1.500"')],
  zbeam: [16, 16, F("M0 2h16v4l-5 5h5v3H7v-3l4-5H8l-5 5h3v3H0v-3l5-5H0z")],
  house1: [16, 16, F("M8 0l8 7v9H0V7z")],
  house2: [16, 16, F("M8 0l8 7v9H0V7z") + F("M4 9h8v3H4z", "#3b4453")],
  house3: [16, 16, F("M2 2h2v2l2-2 4 0 6 5-2 1v7H2V8L0 8l2-3z") + F("M6 9h3v6H6z", "#4a5261")],
  stair: [16, 16, F("M9 0h7v7l-6 9H3v-3H0v-3h4V7h3V4h2z")],
  railing: [16, 16, S("M1 5c5-3 10-3 15-4M1 9c5-3 10-3 15-3M2 4v12M5 3v11M8 3v11M11 2v11M14 2v11", 1.200)],
  ring: [16, 16, `<circle cx="8" cy="9" r="6" fill="none" stroke="currentColor" stroke-width="2"/>` + F("M0 0h4v3H0zM12 0h4v3h-4z")],
  palette: [26, 34, F("M1 1h24v32H1z") + `<path d="M1 7.500h24M15 4h7" stroke="#3b4453" stroke-width="1.500"/><path d="M5 11h4v4H5zM11 11h4v4h-4zM17 11h4v4h-4zM5 18h4v4H5zM11 18h4v4h-4zM5 25h4v4H5zM11 25h4v4h-4zM17 18h4v4h-4z" fill="#454d5c"/>`],
  modelcheck: [30, 34, F("M1 1h16l9 9v23H1z") + `<path d="M5 12c0-6 9-5 9 0 0 4-5 4-5 8M9 22v3" fill="none" stroke="#3b4453" stroke-width="3"/>` + F("M17 18h12l-3 4-5 4 4 2-4 5h-9l3-5 4-2-5-3z", "#8d939d")],
  beamstar: [16, 16, F("M0 2h5v2H4v10h1v2H0v-2h1V4H0zM7 5h9v10H7z") + S("M7 0v7M4 3h7M5 1l5 5")],
  docok: [16, 16, F(doc) + `<path d="M5 9l2 3 4-6" fill="none" stroke="#3b4453" stroke-width="1.500"/>`],
  hammer: [16, 16, F("M0 1h16v4H0z") + S("M8 6L1 15M4 7l5 2-1 5M1 10h5", 2)],
  beamlist: [16, 16, F("M0 2h5v2H4v10h1v2H0v-2h1V4H0zM8 7h8v9H8z") + S("M8 1v6M5 4h7") + `<path d="M9 10h6M9 13h6" stroke="#3b4453"/>`],
  beamlook: [16, 16, F("M5 1h9l-3 4H9L7 9l3 4H1l3-4 2-3H2z") + `<circle cx="12" cy="12" r="4" fill="#222933"/>`],
  doclist: [16, 16, F("M1 3h11v13H1z") + F("M10 0h6v7h-6z", "#8d939d") + `<path d="M3 7h6M3 10h7M3 13h7M13 1v3M13 5v1" stroke="#3b4453" stroke-width="1.300"/>`],
  measure: [30, 20, F("M1 12h28v7H1z") + S("M1 1v9M29 1v9M3 5.500h24", 1.300) + F("M2 5.500l4-3v6zM28 5.500l-4-3v6z") + `<path d="M4 12v4M7 12v3M10 12v4M13 12v3M16 12v4M19 12v3M22 12v4M25 12v3" stroke="#3b4453"/>`],
  numbering: [32, 34, F("M0 1h32v32H0z") + F("M0 1h32v7H0z", "#666d79") + `<text x="7" y="25" font-family="Noto Sans" font-size="10" fill="#4a5261">1000</text>`],
  docmgr: [34, 34, F("M1 1h10l3 4h14v4H10v18H1z") + F("M12 10h13l8 8v15H12z", "#858b96") + `<path d="M15 15h10v7H15zM15 25h4v5h-4zM21 25h4v5h-4zM27 25h4v5h-4z" fill="none" stroke="#3b4453"/>`],
  docpen: [16, 16, F("M1 1h12v13H1z") + `<path d="M3 4h6v4H3zM3 11h8" fill="none" stroke="#3b4453"/>` + S("M15 8l-5 6", 2)],
  docgear: [16, 16, F("M1 1h12v12H1z") + `<path d="M3 4h6v4H3z" fill="none" stroke="#3b4453"/>` + gear(12, 12, 2.500)],
  docedit: [16, 16, F("M1 1h11v13H1z") + `<path d="M3 4h5M3 7h6M3 10h5" stroke="#3b4453"/>` + S("M15 5l-6 10", 2)],
  lists: [26, 32, F("M1 1h24v30H1z") + `<path d="M4 8l3-5 3 5M5 6h4M11 12h11M11 18h11M11 24h11M6 12h2M6 18h2M6 24h2" fill="none" stroke="#3b4453" stroke-width="1.400"/>`],
  nc: [18, 16, F("M1 3h16v10H1z") + `<text x="3" y="11" font-family="Noto Sans" font-size="8" font-weight="700" fill="#3b4453">NC</text>`],
  dxf: [18, 18, `<text x="1" y="6" font-family="Noto Sans" font-size="7" font-weight="700" fill="currentColor">DXF</text>` + F("M5 8h11l-4 4H1zM9 12h7v2h-2v2h2v2H9v-2h2v-2H9z")],
  ncgear: [16, 16, F(doc) + `<path d="M4 5h5M4 8h5" stroke="#3b4453"/>` + gear(12, 11, 2.500)],
  mgmt: [34, 34, `<circle cx="17" cy="17" r="15.500" fill="currentColor"/><path d="M7 26L15 7h5l5 14-4 1-1-4h-6l-3 8zM15 15h4l-2-6z" fill="#454d5c"/>` + gear(25, 25, 4, "#949aa4")],
  tablegear: [16, 16, F("M0 1h14v12H0z") + `<path d="M0 4h14M2 7h2M6 7h6M2 10h2M6 10h3" stroke="#3b4453"/>` + gear(12, 12, 2.500)],
  dbgear: [16, 16, F("M1 3c3-3 10-3 13 0v10c-3 3-10 3-13 0z") + `<path d="M1 4c3 3 10 3 13 0" fill="none" stroke="#3b4453"/>` + gear(12, 12, 2.500)],
  layers: [34, 34, F("M11 2h16L17 9H1zM9 13h14l3-3M7 11L1 17h16l7-7zM7 19l-6 6h15l3-4v-2z") + `<path d="M20 15h12v18H20z" fill="#8d939d"/><path d="M23 18h6v6h-6zM22 27h8M22 30h8" fill="none" stroke="#3b4453" stroke-width="1.300"/>`],
  layerstate: [74, 18, `<circle cx="7" cy="6" r="4.500" fill="#b39c66"/><path d="M5 10h4v4H5z" fill="#b9bfc9"/><circle cx="25" cy="8" r="4" fill="#c0a870"/><path d="M25 1v2M25 13v2M18 8h2M30 8h2M20 3l1.500 1.500M28.500 11.500L30 13M30 3l-1.500 1.500M21.500 11.500L20 13" stroke="#c0a870"/><path d="M38 7h10v8H38z" fill="#ab925b"/><path d="M44 7V4c0-3 6-3 6 0v3" fill="none" stroke="#ab925b" stroke-width="1.500"/><path d="M58.500 3.500h12v12h-12z" fill="#a9afba" stroke="#111"/>`],
  lay1: [16, 16, F(layer(1)) + `<circle cx="12" cy="9" r="3" fill="currentColor"/>` + F("M11 12h2v3h-2z")],
  lay2: [16, 16, stack + S("M15 9l-5 5M10 10v4h4")],
  lay3: [16, 16, F(layer(1)) + S("M12 7v8M8.500 9l7 4M15.500 9l-7 4", 1.300)],
  lay4: [16, 16, F(layer(1)) + F("M9 10h7v6H9z") + S("M10.500 10V8c0-2 4-2 4 0v2")],
  lay5: [16, 16, F("M4 3h12l-4 5H0z") + S("M1 11h10l4-4M1 14h10l4-4", 1.500) + `<circle cx="9" cy="3" r="3" fill="#8d939d"/>`],
  lay6: [16, 16, stack + `<circle cx="13" cy="9" r="2.500" fill="currentColor"/>` + F("M12 11h2v4h-2z")],
  lay7: [16, 16, stack + S("M9 15l5-5M10 10h4v4")],
  lay8: [16, 16, stack + `<circle cx="12" cy="11" r="2" fill="currentColor"/>` + S("M12 7v1M12 14v2M8 11h1M15 11h1")],
  lay9: [16, 16, F(layer(1)) + F("M8 10h7v6H8z") + S("M13 10V8c0-2 3-2 3 0")],
  lay10: [16, 16, stack + F("M9 8l3 2 3-2v4l-3 4-3-3z")],
  rectvp: [30, 32, F("M5 8h18v19H5z", "#586272") + S("M5 8h18v19H5z") + S("M2 9V3h6M2 24v6h6M20 30h7v-6", 1.500) + S("M23 1v14M17 8h13M18 3l10 10M28 3L18 13", 1.800)],
  vmin: [14, 14, `<path d="M2 8h10v4H2z" fill="#fff" stroke="#3c4373"/>`],
  vrestore: [14, 14, `<path d="M4.500 1.500h8v9h-8zM1.500 3.500h8v9h-8z" fill="#fff" stroke="#3c4373" stroke-width="1.300"/><path d="M4 7h3v3H4z" fill="none" stroke="#3c4373"/>`],
  vclose: [14, 14, `<path d="M3 2l8 10M11 2L3 12" stroke="#3c4373" stroke-width="5"/><path d="M3 2l8 10M11 2L3 12" stroke="#fff" stroke-width="2"/>`],
  pgear: [18, 18, `<circle cx="9" cy="9" r="7" fill="none" stroke="#6b7480" stroke-width="2.500" stroke-dasharray="3 2.500"/><circle cx="9" cy="9" r="6" fill="#f4f4f4" stroke="#6b7480" stroke-width="1.200"/><circle cx="9" cy="9" r="2.500" fill="#fff" stroke="#6b7480" stroke-width="1.200"/>`],
  ppin: [14, 10, `<path d="M0 5h5M5 1v8" stroke="#666" stroke-width="1.500"/><path d="M6 2.500h7v5H6z" fill="#b9b9b9" stroke="#777"/>`],
  pplus: [16, 16, `<path d="M6 1.500h4V6h4.500v4H10v4.500H6V10H1.500V6H6z" fill="#8e99a8" stroke="#4c5665" stroke-width="1.200"/>`],
  pclose: [16, 16, `<path d="M2 2l12 12M14 2L2 14" stroke="#6b6b6b" stroke-width="4"/><path d="M2.500 2.500l11 11M13.500 2.500l-11 11" stroke="#d6d6d6" stroke-width="2"/>`],
  flag: [16, 12, `<path d="M0 0h16v12H0z" fill="#22227c"/><path d="M2 2l12 8M14 2L2 10" stroke="#f0608a" stroke-width="4"/><path d="M8 1v10M1 6h14" stroke="#fff" stroke-width="3"/><path d="M8 1v10M1 6h14" stroke="#d21f3c" stroke-width="2"/>`],
  navbar: [31, 214, `<path d="M40 .5H5a4 4 0 0 0-4 4v205a4 4 0 0 0 4 4h35z" fill="#a9b3f3" fill-opacity=".55" stroke="#6670b8" stroke-width="1.500"/>` +
    `<circle cx="27" cy="7" r="4" fill="#8f99dd"/><circle cx="27" cy="207" r="4" fill="#8f99dd"/>` +
    S("M17 21h10v11a11 11 0 1 1-10-11z") + `<circle cx="17" cy="32" r="6" fill="none" stroke="currentColor"/>` +
    F("M14 51h6l-3 3zM14 121h6l-3 3zM14 159h6l-3 3z") + S("M5 59h26M5 166h26") +
    S("M12 85L6 78c-3-4 1-5 3-2l3 2-2-10c0-2 3-2 3 0l2 6V65c0-2 3-2 3 0l1 9 2-8c1-2 3-1 3 0l-1 9 2-4c1-2 3-1 2 1l-3 9-4 4z") +
    S("M6 91l16 15M22 91L6 106M6 95v-4h4M18 91h4v4M6 102v4h4") + `<circle cx="21" cy="106" r="5" fill="none" stroke="currentColor"/>` + S("M25 110l5 5", 2) +
    S("M14 150v-15h-2l4-5 4 5h-2v15z") + `<ellipse cx="16" cy="141" rx="11" ry="5" fill="none" stroke="currentColor" stroke-width="1.300"/>` + F("M8 144l6-3v6z") +
    S("M6 171h5v5H6zM14 171h5v5h-5zM22 171h5v5h-5zM6 180h15v12H6z") + F("M10 182l7 4-7 4z")],
  ucs: [90, 80, `<path d="M29 14l2 48" stroke="#3f9a4a" stroke-width="5"/><path d="M30 14l2 46" stroke="#8fd18a" stroke-width="1.500"/><path d="M31 61l43 5" stroke="#b2506a" stroke-width="5"/><path d="M31 60l43 5" stroke="#eaa0a4" stroke-width="1.500"/><path d="M32 60L10 74" stroke="#2f5fae" stroke-width="5"/><circle cx="10" cy="74" r="2.500" fill="#7fc0f4"/><path d="M26 0l6 6 6-6M32 6v6" fill="none" stroke="#2f8f7a" stroke-width="1.200"/><path d="M71 50l13 12M84 50L71 62" stroke="#9b3f95" stroke-width="1.200"/><path d="M6 59h11L6 71h11" fill="none" stroke="#2468f0" stroke-width="1.200"/>`],
  dlglogo: [16, 16, F("M0 0h16v16H0z", "#c4dbee") + F("M2 11L6 1h4l4 10h-3l-1-2-4 1-1 1zM6 7l3-.500L7.500 3z", "#1a4b86") + F("M10 13h4v2h-4z", "#2a6fb5")],
  dmin: [12, 12, S("M1 6.500h10")],
  dmax: [12, 12, S("M1.500 1.500h9v9h-9z", 1.200)],
  dclose: [12, 12, S("M1 1l10 10M11 1L1 11", 1.200)],
  minus: [20, 12, `<path d="M1.500 1.500h8v8h-8z" fill="#fff" stroke="#919191"/><path d="M3.500 5.500h4" stroke="#3553a5"/><path d="M11 5.500h7" stroke="#888" stroke-dasharray="1 1"/>`],
  plusbox: [17, 12, `<path d="M1.500 1.500h8v8h-8z" fill="#fff" stroke="#919191"/><path d="M3.500 5.500h4M5.500 3.500v4" stroke="#3553a5"/><path d="M11 5.500h6" stroke="#888" stroke-dasharray="1 1"/>`],
  docs: [16, 14, `<path d="M1.500 1.500h5l2 2v7h-7z" fill="#fff" stroke="#111"/><path d="M7.500 4.500h5l2.500 2.500v6H7.500z" fill="#fff" stroke="#111a6e"/><path d="M3 4h3M3 6h3M3 8h3M9 8h4M9 10h4" stroke="#222"/>`],
  dwg: [16, 16, F("M0 0h16v16H0z", "#0000c8") + `<path d="M4.500 3.500h6v6h-6zM7.500 0v3M7.500 10v4M1 6.500h3M11 6.500h4" fill="none" stroke="#fff"/><path d="M7 6h1v1H7zM2 2h1v1H2zM12 2h1v1h-1zM2 12h1v1H2z" fill="#fff"/><path d="M16 11l-5 5h5z" fill="#ddd"/>`],
  circle0: [23, 16, `<circle cx="8.500" cy="8" r="6.500" fill="#fff" stroke="#222"/><path d="M15 8.500h6" stroke="#222"/>`],
  okcheck: [18, 16, F("M1 9l4 2L16 0 7 15H5z", "#12b812")],
  update: [18, 16, F("M0 1h16v3H8l-2 6H2z", "#d9c800") + `<path d="M0 1h16v2H9M1 4h7M2 6h6M3 8h5" stroke="#222" fill="none"/><circle cx="12" cy="11" r="4.500" fill="#d81818"/><path d="M12 8v4M12 13v1.500" stroke="#fff" stroke-width="1.500"/>`],
  bom: [16, 16, `<path d="M4.500 4.500l9 1v9h-9zM6 2.500h9.500V14" fill="#fff" stroke="#222"/><path d="M1 2l6 2 5 6M3 6l5 5M6 12h5M9 8h3" stroke="#222" fill="none"/>`],
  dstv: [16, 16, `<path d="M1.500.5h13v13l-3 1.500-3-1.500-3 1.500-4-1.500z" fill="#fff" stroke="#222"/><path d="M3 3h2.500v3.500H3zM7 3h2v3.500H7zM13 3h-2v3.500h2" fill="none" stroke="#c01818" stroke-width="1.200"/>`],
  sleft: [6, 10, S("M5 1L1 5l4 4", 1.800)],
  sright: [6, 10, S("M1 1l4 4-4 4", 1.800)],
  chev: [9, 6, S("M.5.5L4.500 5l4-4.500", 1.200)],
  grip: [8, 8, F("M6 0h2v2H6zM3 3h2v2H3zM6 3h2v2H6zM0 6h2v2H0zM3 6h2v2H3zM6 6h2v2H6z")],
  cmdside: [25, 56, F([0, 3, 6, 9, 12, 15].map((x) => `M${x + 4} 5h2v2h-2zM${x + 4} 8h2v2h-2z`).join("")) + S("M7 17l8 8M15 17l-8 8", 1.800) + S("M5 50l8-8", 2.500) + F("M11 42c-1-4 2-6 5-5l-2 3 2 2 3-2c1 3-2 6-6 5z")],
  cmdicon: [26, 12, `<path d="M.5.5h15v11H.5z" fill="#eee" stroke="#555"/><path d="M0 0h16v2.500H0z" fill="#555"/><path d="M3 4.500L6 6.500l-3 2M7 9h4" fill="none" stroke="#333"/><path d="M18 3h8l-4 4.500z" fill="#555"/>`],
  sgrid: [16, 16, S("M4 1v14M8 1v14M12 1v14M1 4h14M1 8h14M1 12h14", 1.200)],
  sdots: [16, 16, dots([1, 7, 12].flatMap((y) => [1, 7, 12].map((x) => [x, y])))],
  sortho: [16, 16, S("M2 0v14h14M2 9h4v5", 1.400)],
  spolar: [18, 18, `<circle cx="8" cy="10" r="6" fill="none" stroke="currentColor" stroke-width="1.400"/>` + S("M8 10l7-9M8 10h9", 1.400)],
  siso: [16, 16, `<path d="M8 0v16" stroke="#56b36c"/><path d="M1 2l13 12" stroke="#c0707c"/><path d="M6 6h4v3H6z" fill="#d6dae0"/>`],
  sangle: [18, 16, S("M15 1L2 14h15", 1.500) + F("M8 6l4 1-1 3z")],
  sosnap: [18, 18, S("M4 5h11v11H4z", 1.400) + `<path d="M1.500 1.500h4v4h-4z" fill="#5f8fc6" stroke="#fff"/>`],
  sann1: [16, 16, annA + `<circle cx="13" cy="3.500" r="2.300" fill="none" stroke="currentColor" stroke-width="1.300"/>`],
  sann2: [16, 16, annA + F("M12 0l3 0-1 3h2l-5 5 1-4h-2z")],
  sann3: [16, 16, annA],
  sgear: [18, 18, gear(9, 9, 4.500)],
  splus: [18, 18, S("M9 1v16M1 9h16", 2)],
  sshapes: [18, 18, S("M2 2h5v5H2zM5 10l3 6H2z") + `<circle cx="13" cy="8" r="3" fill="none" stroke="currentColor"/>`],
  sprint: [18, 18, S("M4 6V1h10v5M2 6h14v8H2z", 1.500) + `<path d="M5 10h8v6H5z" fill="#e2a984" stroke="#fff" stroke-width=".8"/>`],
  sstd: [18, 18, F("M2 1h9l3 4v9H2z", "#3d7fc9") + F("M1 9h7v7H1z", "#e6b04a") + `<path d="M7 11l4 5 6-9" fill="none" stroke="#4fae4f" stroke-width="2.500"/>`],
  sperf: [18, 18, F("M1 2h15v12H1z", "#c9cdd3") + `<path d="M2 10l4-6 4 6 3-4" fill="none" stroke="#43505f" stroke-width="1.300"/><path d="M13 8l4 8H9z" fill="#d98a5c"/>`],
  sclean: [18, 16, S("M1 2h16v12H1zM4 11l3-3M4 8.500V11h2.500M14 5l-3 3M11.500 5H14v2.500", 1.300)],
  sburger: [18, 16, S("M1 3h16M1 8h16M1 13h16", 2)],
  win: [18, 18, F("M1 3.500L8 2.500V8.500H1zM9 2.300L17 1v7.500H9zM1 9.500h7v6L1 14.500zM9 9.500h8V17l-8-1.300z", "#fff")],
  taskview: [18, 18, `<path d="M1 1v2h9V1M1 17v-2h9v2M1.500 5.500h9v7h-9zM15 1v3M15 9v8M13.500 5.500h3v3h-3z" fill="none" stroke="#fff" stroke-width="1.300"/>`],
  explorer: [24, 20, F("M1 2h8l2 3h12v14H1z", "#f6c84c") + F("M1 2h8l2 3H1z", "#d9972a") + F("M4 11h16v8h-5v-4H9v4H4z", "#3d9be0")],
  edge: [22, 22, F("M1 11C1 4 6 1 11 1c6 0 10 4 10 10v2H8c0 4 6 6 12 3v4c-8 3-16 0-16-7 0-3 2-5 5-6-1 1-1 2-1 3h7c0-6-10-7-14 1z", "#1b7fd9")],
  outlook: [24, 24, `<rect x="1" y="1" width="22" height="22" rx="3" fill="#f7d98c"/><circle cx="9" cy="10" r="5.500" fill="none" stroke="#d98a1c" stroke-width="4"/><path d="M16 11l7-4v14H10l8-6z" fill="#e8a536"/><circle cx="19" cy="11" r="3.500" fill="#fff" stroke="#d98a1c"/>`],
  ie: [24, 24, F("M3 13C3 7 7 4 12 4c6 0 9 4 9 10H8c0 5 7 6 12 2-2 9-17 9-17-3zM8 11h8c0-4-7-4-8 0z", "#5fc4f2") + `<path d="M3 22C-2 16 10 1 20 1c4 0 4 4 1 8" fill="none" stroke="#f2c53a" stroke-width="2"/>`],
  tas: [26, 26, F("M1 1h24v24H1z", "#d3dde4") + F("M4 18L12 3h1l8 15-4 1-2-3H9l-2 3z", "#1877bd") + F("M12.500 3L21 18l-4 1-4-7z", "#0e4f87") + F("M17 20h3v1h-2v1h2v1h-2v2h-1zM21 20h3v1h-2v1h2v3h-3v-1h2v-1h-2z", "#333")],
  pdf: [22, 22, F("M0 1h22v20H0z", "#ececec") + `<path d="M5 17c5-3 6-8 5-12M10 9c1 4 4 5 8 5M5 16c4-3 8-3 13-2" fill="none" stroke="#c92020" stroke-width="1.700"/>`],
  photos: [24, 24, F("M1 1h22v22H1z", "#2d8fe8") + F("M1 16l8-9 14 14v2H1z", "#123a6b") + F("M14 15l4-4 5 4v7z", "#7d7fd8") + `<circle cx="16" cy="6" r="2" fill="#fff"/>`],
  up: [12, 8, S("M1 7l5-5 5 5", 1.400)],
  net: [16, 14, S("M4 2.500h11v8H4zM9 10v3M6 13h7M1 1h4v4H1zM3 5v7", 1.200)],
  vol: [16, 14, S("M1 5h2l4-3.500v11L3 9H1zM10 4.500l5 5M15 4.500l-5 5", 1.200)],
  notif: [18, 20, F("M1 1h16v13h-6l-4 4v-4H1z", "#fff") + `<path d="M4 5h10M4 8h10M4 11h6" stroke="#111"/>`],
};

const draw = (name) => {
  const [w, h, body] = ICONS[name];
  return `<svg width="${w}" height="${h}" viewBox="0 0 ${w} ${h}" aria-hidden="true">${body}</svg>`;
};
document.querySelectorAll("[data-icons]").forEach((box) => {
  box.innerHTML = box.dataset.icons.split(" ").map((n) => `<span class="i-${n}">${draw(n)}</span>`).join("");
});
document.querySelectorAll("[data-icon]").forEach((el) => {
  el.insertAdjacentHTML("afterbegin", draw(el.dataset.icon));
});
```
